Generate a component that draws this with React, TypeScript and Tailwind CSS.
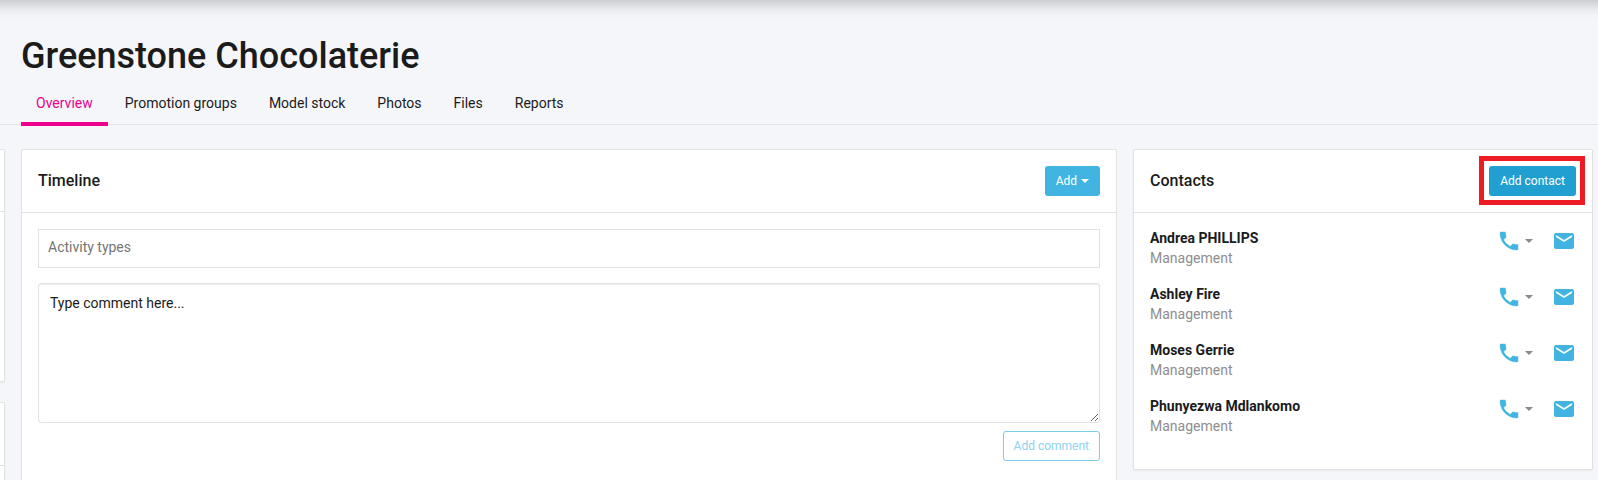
import React from "react";
import { MdEmail } from "react-icons/md";

interface Contact {
  name: string;
  role: string;
}

const tabs = ["Overview", "Promotion groups", "Model stock", "Photos", "Files", "Reports"];

const contacts: Contact[] = [
  { name: "Andrea PHILLIPS", role: "Management" },
  { name: "Ashley Fire", role: "Management" },
  { name: "Moses Gerrie", role: "Management" },
  { name: "Phunyezwa Mdlankomo", role: "Management" },
];

const Caret: React.FC<{ className?: string }> = ({ className = "" }) => (
  <svg viewBox="0 0 8 4" className={`w-2 h-1 ${className}`} fill="currentColor" aria-hidden="true">
    <path d="M0 0h8L4 4z" />
  </svg>
);

const PhoneIcon: React.FC<{ className?: string }> = ({ className = "" }) => (
  <svg
    viewBox="0 0 24 24"
    className={className}
    fill="currentColor"
    stroke="currentColor"
    strokeWidth="0.5"
    aria-hidden="true"
  >
    <path d="M6.62 10.79c1.44 2.83 3.76 5.14 6.59 6.59l2.2-2.2c.27-.27.67-.36 1.02-.24 1.12.37 2.33.57 3.57.57.55 0 1 .45 1 1V20c0 .55-.45 1-1 1-9.39 0-17-7.61-17-17 0-.55.45-1 1-1h3.5c.55 0 1 .45 1 1 0 1.25.2 2.45.57 3.57.11.35.03.74-.25 1.02l-2.2 2.2z" />
  </svg>
);

const ContactRow: React.FC<{ contact: Contact }> = ({ contact }) => (
  <li className="flex items-start justify-between pb-4">
    <div>
      <p className="font-bold">{contact.name}</p>
      <p className="text-[#8e8e8e]">{contact.role}</p>
    </div>
    <div className="flex items-center gap-[19px] pt-px">
      <button type="button" aria-label={`Call ${contact.name}`} className="flex items-center gap-1">
        <PhoneIcon className="w-6 h-6 text-[#41b4e2]" />
        <Caret className="text-[#888888]" />
      </button>
      <a href="#email" aria-label={`Email ${contact.name}`}>
        <MdEmail className="w-6 h-6 text-[#41b4e2]" />
      </a>
    </div>
  </li>
);

export default function App() {
  return (
    <div className="min-h-screen overflow-hidden bg-[#f5f6fa] text-[#1b1b1b] text-sm font-[Roboto,sans-serif]">
      {/* Shadow of the top bar */}
      <div className="h-10 -mt-10 -mx-6 shadow-[0_1px_18px_rgba(0,0,0,0.3)]" />

      <header className="border-b border-[#e2e2e2] pl-[21px] pt-8">
        <h1 className="text-4xl leading-[48px] font-medium">Greenstone Chocolaterie</h1>
        <nav className="flex gap-0.5 mt-0.5 -mb-0.5">
          {tabs.map((tab, i) => (
            <a
              key={tab}
              href="#tab"
              className={
                i === 0
                  ? "px-[15px] pt-[11px] pb-[9px] border-b-4 border-[#ec008c] text-[#ec008c]"
                  : "px-[15px] pt-[11px] pb-[9px] border-b-4 border-transparent"
              }
            >
              {tab}
            </a>
          ))}
        </nav>
      </header>

      <main className="grid grid-cols-[5px_minmax(0,1fr)_460px] items-start gap-4 pt-6 pr-[5px]">
        {/* Edge of the details column */}
        <div className="flex flex-col gap-5">
          <div className="h-[233px] bg-white border border-l-0 border-[#e2e2e2] rounded-r-xs shadow-xs">
            <div className="h-[62px] border-b border-[#e2e2e2]" />
          </div>
          <div className="h-[233px] -mb-40 bg-white border border-l-0 border-[#e2e2e2] rounded-r-xs shadow-xs">
            <div className="h-[63px] border-b border-[#e2e2e2]" />
          </div>
        </div>

        <section className="bg-white border border-[#e2e2e2] rounded-xs">
          <div className="flex items-center justify-between p-4 border-b border-[#e2e2e2]">
            <h2 className="text-base font-medium">Timeline</h2>
            <button
              type="button"
              className="flex items-center gap-1 h-[30px] px-[11px] rounded-[3px] bg-[#41b4e2] text-white text-xs"
            >
              Add
              <Caret />
            </button>
          </div>
          <form className="flex flex-col p-4 pb-10">
            <input
              type="text"
              aria-label="Activity types"
              placeholder="Activity types"
              className="h-[39px] px-[9px] pb-1 border border-[#e2e2e2] placeholder:text-[#757575]"
            />
            <textarea
              aria-label="Comment"
              defaultValue="Type comment here..."
              className="h-[140px] mt-[15px] px-[11px] py-[9px] border border-[#e2e2e2] rounded-[3px] shadow-[inset_0_1px_1px_rgba(0,0,0,0.075)]"
            />
            <button
              type="button"
              className="self-end h-[30px] mt-2 px-2.5 border border-[#7bcdee] rounded-[3px] text-[#8dd3ee] text-xs"
            >
              Add comment
            </button>
          </form>
        </section>

        <section className="bg-white border border-[#e2e2e2] rounded-xs shadow-xs">
          <div className="flex items-center justify-between p-4 border-b border-[#e2e2e2]">
            <h2 className="text-base font-medium">Contacts</h2>
            <div className="relative">
              <button
                type="button"
                className="block h-[30px] px-[11px] rounded-[3px] bg-[#219fd1] text-white text-xs"
              >
                Add contact
              </button>
              <span className="absolute -top-2.5 -left-2.5 -right-[9px] -bottom-[9px] border-5 border-[#ed1c24] pointer-events-none" />
            </div>
          </div>
          <ul className="px-4 pt-[15px] pb-[17px]">
            {contacts.map((contact) => (
              <ContactRow key={contact.name} contact={contact} />
            ))}
          </ul>
        </section>
      </main>
    </div>
  );
}
